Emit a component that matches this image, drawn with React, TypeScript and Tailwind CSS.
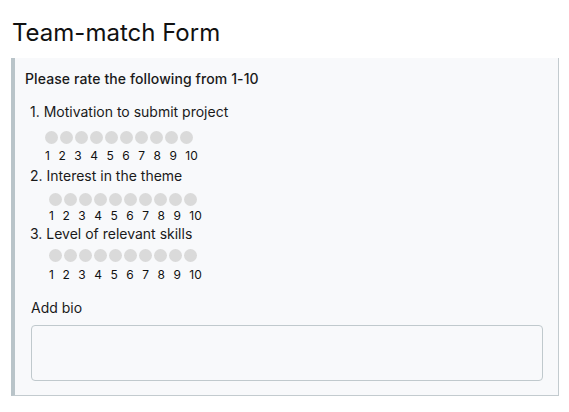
const ratings = [
  { label: '1. Motivation to submit project', offset: 'ml-[20px]', gap: 'mt-[9px]', numGap: 'mt-[4px]', top: 'mt-[13px]' },
  { label: '2. Interest in the theme', offset: 'ml-[24px]', gap: 'mt-[7px]', numGap: 'mt-[2px]', top: 'mt-[2px]' },
  { label: '3. Level of relevant skills', offset: 'ml-[24px]', gap: 'mt-[5px]', numGap: 'mt-[5px]', top: 'mt-0' },
];

const scale = [1, 2, 3, 4, 5, 6, 7, 8, 9, 10];

export default function App() {
  return (
    <div className="w-[569px] h-[412px] bg-white font-['Inter',sans-serif] text-[#1a1a1a]">
      <h1 className="pt-[17px] pl-[12px] text-[24px] leading-[32px] font-normal text-[#111]">Team-match Form</h1>

      {/* Form panel */}
      <div className="mt-[9px] ml-[11px] w-[548px] bg-[#f8f9fb] border-l-4 border-l-[#b9c4c9] border-r border-b border-r-[#c3cbcf] border-b-[#c3cbcf] pt-[11px] pb-[14px] pl-[10px] pr-[15px]">
        <p className="text-[14px] leading-[20px] font-medium tracking-[0.1px]">Please rate the following from 1-10</p>

        {ratings.map((r) => (
          <div key={r.label} className={r.top}>
            <p className="ml-[5px] text-[14px] leading-[20px]">{r.label}</p>
            <div className={`flex gap-[2px] ${r.gap} ${r.offset}`}>
              {scale.map((n) => (
                <span key={n} className="w-[13px] h-[13px] rounded-full bg-[#dadada]" />
              ))}
            </div>
            <div className={`flex gap-[8.5px] text-[12px] leading-[16px] text-[#111] ${r.numGap} ${r.offset}`}>
              {scale.map((n) => (
                <span key={n}>{n}</span>
              ))}
            </div>
          </div>
        ))}

        <p className="mt-[15px] ml-[6px] text-[14px] leading-[20px]">Add bio</p>
        <textarea className="mt-[7px] ml-[6px] block w-[512px] h-[56px] rounded-[4px] border border-[#c0c9cd] bg-[#f8f9fb] resize-none outline-none" />
      </div>
    </div>
  );
}
